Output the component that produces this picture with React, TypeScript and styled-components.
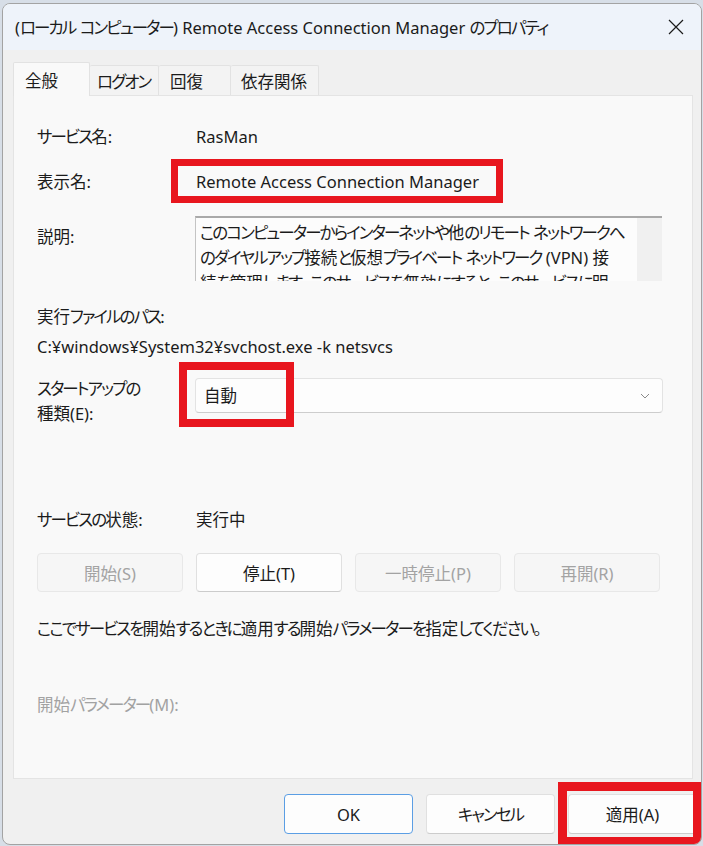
import React from 'react';
import styled, { createGlobalStyle } from 'styled-components';

const GlobalStyle = createGlobalStyle`
  html, body {
    margin: 0;
    padding: 0;
    background: #d7dee7;
  }
  body {
    font-family: "Noto Sans", "Noto Sans CJK JP", sans-serif;
    font-feature-settings: "palt";
    color: #1b1b1b;
    font-size: 16.5px;
  }
`;

// kana in the reference font are much narrower than in Noto, tighten them
const KanaRun = styled.span`
  letter-spacing: -1.9px;
`;

const Jp = ({ text }: { text: string }) => (
  <>
    {text.split(/([\u3040-\u30ff]+)/).map((part, i) =>
      /[\u3040-\u30ff]/.test(part) ? <KanaRun key={i}>{part}</KanaRun> : part
    )}
  </>
);

const Window = styled.div`
  margin: 3px 0 0 2px;
  width: 700px;
  height: 842px;
  box-sizing: border-box;
  border: 1px solid #a3a3a3;
  border-radius: 8px;
  background: #f0f0f0;
  overflow: hidden;
  display: flex;
  flex-direction: column;
`;

const TitleBar = styled.div`
  height: 46px;
  flex: none;
  background: #eef3fa;
  display: flex;
  align-items: center;
  justify-content: space-between;
  padding: 0 10px 0 12px;
`;

const Title = styled.span`
  font-size: 16.5px;
  white-space: nowrap;
`;

const CloseButton = styled.div`
  width: 30px;
  height: 30px;
  display: flex;
  align-items: center;
  justify-content: center;
`;

const Body = styled.div`
  flex: 1;
  padding: 12px 8px 0 10px;
  display: flex;
  flex-direction: column;
`;

const TabRow = styled.div`
  display: flex;
  align-items: flex-end;
`;

const Tab = styled.div<{ $w: number; $pl: number; $active?: boolean }>`
  width: ${(p) => p.$w}px;
  box-sizing: border-box;
  height: ${(p) => (p.$active ? 34 : 30)}px;
  margin-bottom: ${(p) => (p.$active ? -1 : 0)}px;
  padding-left: ${(p) => p.$pl}px;
  background: ${(p) => (p.$active ? '#f9f9f9' : '#f3f3f3')};
  border: 1px solid #e2e2e2;
  border-bottom: none;
  border-left: ${(p) => (p.$active ? '1px solid #e2e2e2' : 'none')};
  border-radius: 2px 2px 0 0;
  position: relative;
  z-index: ${(p) => (p.$active ? 1 : 0)};
  display: flex;
  align-items: center;
  white-space: nowrap;
`;

const Panel = styled.div`
  height: 684px;
  box-sizing: border-box;
  border: 1px solid #e4e4e4;
  background: #f9f9f9;
  padding: 28px 31px 0 23px;
  display: flex;
  flex-direction: column;
`;

const Row = styled.div<{ $mt: number }>`
  display: grid;
  grid-template-columns: 158px 1fr;
  margin-top: ${(p) => p.$mt}px;
  line-height: 25px;
`;

const Line = styled.div<{ $mt: number; $muted?: boolean }>`
  margin-top: ${(p) => p.$mt}px;
  line-height: 25px;
  white-space: nowrap;
  color: ${(p) => (p.$muted ? '#a2a2a2' : '#1b1b1b')};
`;

const Label = styled.div<{ $pt?: number }>`
  padding-top: ${(p) => p.$pt ?? 0}px;
  white-space: nowrap;
`;

const Value = styled.div`
  position: relative;
  white-space: nowrap;
  padding-left: 1px;
`;

const Mark = styled.span<{ $l: number; $t: number; $w: number; $h: number; $b: number }>`
  position: absolute;
  left: ${(p) => p.$l}px;
  top: ${(p) => p.$t}px;
  width: ${(p) => p.$w}px;
  height: ${(p) => p.$h}px;
  box-sizing: border-box;
  border: ${(p) => p.$b}px solid #e8161e;
  pointer-events: none;
  z-index: 2;
`;

const DescBox = styled.div`
  height: 65px;
  width: 467px;
  box-sizing: border-box;
  border-top: 2px solid #a9a9a9;
  border-left: 1px solid #c4c4c4;
  background: #fcfcfc;
  display: flex;
  overflow: hidden;
`;

const DescText = styled.div`
  flex: 1;
  min-width: 0;
  padding: 2px 0 0 4px;
  line-height: 25px;
  white-space: nowrap;
  overflow: hidden;
`;

const ScrollTrack = styled.div`
  width: 25px;
  flex: none;
  background: #f0f0f0;
`;

const Combo = styled.div`
  position: relative;
  margin-top: 2px;
  width: 468px;
  height: 35px;
  box-sizing: border-box;
  border: 1px solid #e3e3e3;
  border-bottom-color: #cdcdcd;
  border-radius: 4px;
  background: #fdfdfd;
  display: flex;
  align-items: center;
  justify-content: space-between;
  padding: 0 12px 0 8px;
`;

const ButtonGrid = styled.div`
  margin-top: 21px;
  display: grid;
  grid-template-columns: repeat(4, 146px);
  column-gap: 13px;
`;

const Button = styled.div<{ $disabled?: boolean; $default?: boolean }>`
  height: 39px;
  box-sizing: border-box;
  border: 1px solid ${(p) => (p.$default ? '#5b9ee4' : p.$disabled ? '#e8e8e8' : '#e0e0e0')};
  border-bottom-color: ${(p) => (p.$default ? '#5b9ee4' : p.$disabled ? '#e8e8e8' : '#cccccc')};
  border-radius: 4px;
  background: ${(p) => (p.$disabled ? '#f6f6f6' : '#fdfdfd')};
  color: ${(p) => (p.$disabled ? '#a3a3a3' : '#1b1b1b')};
  display: flex;
  align-items: center;
  justify-content: center;
  white-space: nowrap;
  position: relative;
`;

const Footer = styled.div`
  display: flex;
  justify-content: flex-end;
  gap: 13px;
  margin: 15px -4px 0 0;
`;

const FooterButton = styled(Button)`
  width: 129px;
  height: 40px;
`;

const CloseIcon = () => (
  <svg width="16" height="16" viewBox="0 0 16 16">
    <path d="M1 1 L15 15 M15 1 L1 15" stroke="#1b1b1b" strokeWidth="1.2" fill="none" />
  </svg>
);

const Chevron = () => (
  <svg width="10" height="6" viewBox="0 0 10 6">
    <path d="M1 1 L5 5 L9 1" stroke="#8a8a8a" strokeWidth="1" fill="none" />
  </svg>
);

const description = [
  'このコンピューターからインターネットや他のリモート ネットワークへ',
  'のダイヤルアップ接続と仮想プライベート ネットワーク (VPN) 接',
  '続を管理します。このサービスを無効にすると、このサービスに明',
];

export default function App() {
  return (
    <>
      <GlobalStyle />
      <Window>
        <TitleBar>
          <Title>
            <Jp text="(ローカル コンピューター) Remote Access Connection Manager のプロパティ" />
          </Title>
          <CloseButton>
            <CloseIcon />
          </CloseButton>
        </TitleBar>
        <Body>
          <TabRow>
            <Tab $w={77} $pl={11} $active>全般</Tab>
            <Tab $w={69} $pl={7}><Jp text="ログオン" /></Tab>
            <Tab $w={72} $pl={11}>回復</Tab>
            <Tab $w={88} $pl={10}>依存関係</Tab>
          </TabRow>
          <Panel>
            <Row $mt={0}>
              <Label><Jp text="サービス名:" /></Label>
              <Value>RasMan</Value>
            </Row>
            <Row $mt={20}>
              <Label>表示名:</Label>
              <Value>
                Remote Access Connection Manager
                <Mark $l={-24} $t={-10} $w={332} $h={44} $b={7} />
              </Value>
            </Row>
            <Row $mt={22}>
              <Label $pt={8}>説明:</Label>
              <DescBox>
                <DescText>
                  {description.map((line) => (
                    <div key={line}>
                      <Jp text={line} />
                    </div>
                  ))}
                </DescText>
                <ScrollTrack />
              </DescBox>
            </Row>
            <Line $mt={23}><Jp text="実行ファイルのパス:" /></Line>
            <Line $mt={5}>C:¥windows¥System32¥svchost.exe -k netsvcs</Line>
            <Row $mt={17}>
              <Label>
                <Jp text="スタートアップの" />
                <br />
                種類(E):
              </Label>
              <div>
                <Combo>
                  <span>自動</span>
                  <Chevron />
                  <Mark $l={-17} $t={-17} $w={115} $h={65} $b={8} />
                </Combo>
              </div>
            </Row>
            <Row $mt={81}>
              <Label><Jp text="サービスの状態:" /></Label>
              <Value>実行中</Value>
            </Row>
            <ButtonGrid>
              <Button $disabled>開始(S)</Button>
              <Button>停止(T)</Button>
              <Button $disabled>一時停止(P)</Button>
              <Button $disabled>再開(R)</Button>
            </ButtonGrid>
            <Line $mt={24}>
              <Jp text="ここでサービスを開始するときに適用する開始パラメーターを指定してください。" />
            </Line>
            <Line $mt={51} $muted>
              <Jp text="開始パラメーター(M):" />
            </Line>
          </Panel>
          <Footer>
            <FooterButton $default>OK</FooterButton>
            <FooterButton><Jp text="キャンセル" /></FooterButton>
            <FooterButton>
              適用(A)
              <Mark $l={-11} $t={-13} $w={144} $h={64} $b={9} />
            </FooterButton>
          </Footer>
        </Body>
      </Window>
    </>
  );
}
